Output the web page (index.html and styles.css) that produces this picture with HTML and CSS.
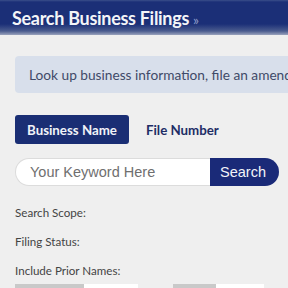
FILE: index.html
```html
<!DOCTYPE html>
<html>
<head>
<meta charset="utf-8">
<link rel="stylesheet" href="styles.css">
</head>
<body>
<header class="banner">
  <h1 class="banner-title">Search Business Filings <span class="raquo">»</span></h1>
</header>
<main class="content">
  <div class="notice">Look up business information, file an amendment, or order documents.</div>
  <div class="tabs">
    <button class="tab tab-active">Business Name</button>
    <button class="tab">File Number</button>
  </div>
  <div class="search">
    <input class="search-input" type="text" placeholder="Your Keyword Here">
    <button class="search-btn">Search</button>
  </div>
  <div class="fields">
    <div class="field">Search Scope:</div>
    <div class="field">Filing Status:</div>
    <div class="field">Include Prior Names:</div>
  </div>
  <div class="toggles">
    <div class="toggle"><span class="t-on"></span><span class="t-off"></span></div>
    <div class="toggle toggle-2"><span class="t-on"></span><span class="t-off"></span></div>
  </div>
</main>
</body>
</html>
```
FILE: styles.css
```css
* { box-sizing: border-box; }
html, body { margin: 0; padding: 0; }
body {
  background: #efefef;
  font-family: Lato, "Open Sans", sans-serif;
  width: 288px;
  height: 288px;
  overflow: hidden;
}
.banner {
  height: 35px;
  background: linear-gradient(to bottom, #3a4f8a 0px, #1b2f77 2px, #1b2f77 24px, #4a5b8e 31px, #9aa3bd 35px);
  padding: 0 0 0 12px;
  display: flex;
  align-items: center;
  overflow: hidden;
}
.banner-title {
  margin: 0;
  color: #f4f5f8;
  font-size: 18px;
  font-weight: 700;
  white-space: nowrap;
  letter-spacing: -0.3px;
  padding-top: 1px;
}
.raquo {
  color: #8d9cc8;
  font-size: 14px;
  font-weight: 400;
}
.content {
  padding: 21px 0 0 15px;
  height: 253px;
  overflow: hidden;
}
.notice {
  background: #d8dfeb;
  border-radius: 4px;
  width: 300px;
  height: 37px;
  padding: 0 0 0 14px;
  display: flex;
  align-items: center;
  color: #3f4a68;
  font-size: 13.7px;
  white-space: nowrap;
  overflow: hidden;
}
.tabs {
  display: flex;
  align-items: center;
  margin-top: 22px;
  gap: 5px;
}
.tab {
  font-family: Lato, sans-serif;
  font-weight: 700;
  font-size: 13.3px;
  border: 0;
  background: transparent;
  color: #1e2d66;
  height: 29px;
  padding: 0 12px;
  border-radius: 3px;
  cursor: pointer;
}
.tab-active {
  background: #1a2e74;
  color: #f1f3f8;
}
.search {
  display: flex;
  margin-top: 14px;
  width: 264px;
  height: 28px;
}
.search-input {
  flex: 1;
  min-width: 0;
  border: 1px solid #dcdcdc;
  border-right: 0;
  border-radius: 14px 0 0 14px;
  background: #fff;
  padding: 0 0 0 14px;
  font-family: "Liberation Sans", Arial, sans-serif;
  font-size: 14.5px;
  outline: none;
}
.search-input::placeholder { color: #6f6f6f; }
.search-btn {
  width: 69px;
  border: 0;
  background: #1a2a78;
  color: #f3f4f8;
  font-family: "Liberation Sans", Arial, sans-serif;
  font-size: 14.5px;
  border-radius: 0 14px 14px 0;
  padding: 0 3px 0 0;
}
.fields {
  display: flex;
  flex-direction: column;
  gap: 15px;
  margin-top: 20px;
}
.field {
  font-size: 11.6px;
  color: #444;
  height: 14px;
  line-height: 14px;
}
.toggles {
  display: flex;
  gap: 35px;
  margin-top: 6px;
}
.toggle { display: flex; height: 20px; }
.t-on { width: 69px; background: #c9c9c9; }
.t-off { width: 54px; background: #fff; }
.toggle-2 .t-on { width: 43px; }
.toggle-2 .t-off { width: 48px; }
```
